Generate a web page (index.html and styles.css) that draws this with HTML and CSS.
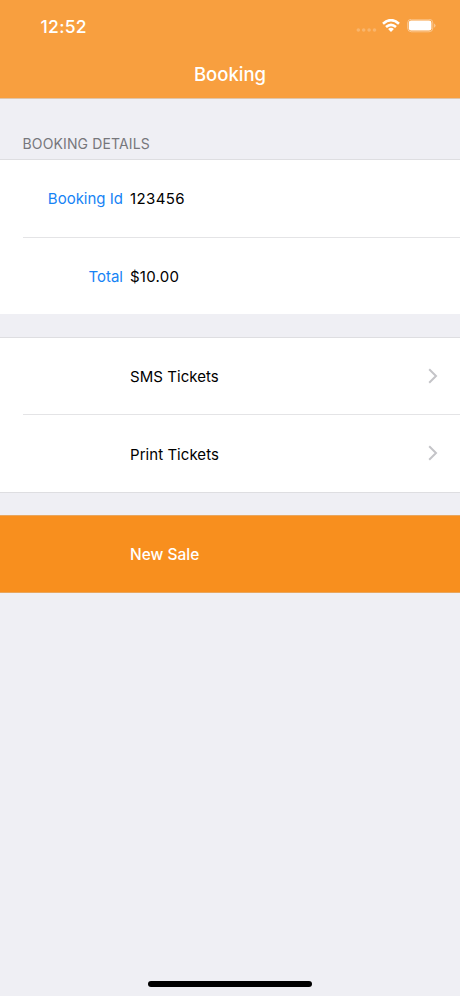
FILE: index.html
```html
<!DOCTYPE html>
<html lang="en">
<head>
<meta charset="utf-8">
<title>Booking</title>
<link rel="stylesheet" href="styles.css">
</head>
<body>
<header class="header">
  <div class="status">
    <span class="time">12:52</span>
    <div class="indicators">
      <svg class="dots" width="21" height="5" viewBox="0 0 21 5" fill="#fff" fill-opacity=".23"><circle cx="2.3" cy="2" r="1.8"/><circle cx="7.7" cy="2" r="1.8"/><circle cx="13.1" cy="2" r="1.8"/><circle cx="18.5" cy="2" r="1.8"/></svg>
      <svg class="wifi" width="18" height="14" viewBox="0 0 18 14" fill="none" stroke="#fff" stroke-width="2.6"><path d="M1 4.7Q9-2.4 17 4.7M4 8Q9 3.6 14 8"/><path d="M6.1 9.9Q9 7.8 11.9 9.9L9 12.9Z" fill="#fff" stroke="none"/></svg>
      <svg class="battery" width="29" height="14" viewBox="0 0 29 14"><rect x=".6" y=".2" width="25.2" height="12.6" rx="3.8" fill="none" stroke="#fff" stroke-opacity=".4"/><rect x="1.8" y="1.5" width="22.6" height="10" rx="2.3" fill="#fff"/><path d="M27 4.4Q28.6 5.1 28.6 6.6T27 8.8Z" fill="#fff" fill-opacity=".4"/></svg>
    </div>
  </div>
  <h1 class="title">Booking</h1>
</header>
<main>
  <h2 class="section-title">BOOKING DETAILS</h2>
  <section class="group details">
    <div class="row"><span class="label booking-label">Booking Id</span><span class="value number">123456</span></div>
    <div class="row"><span class="label total-label">Total</span><span class="value price">$10.00</span></div>
  </section>
  <section class="group links">
    <div class="row"><span class="value sms">SMS Tickets</span><svg class="chevron" width="10" height="16" viewBox="0 0 10 16"><path d="M1.2 1.3L8 8L1.2 14.7"/></svg></div>
    <div class="row"><span class="value print">Print Tickets</span><svg class="chevron" width="10" height="16" viewBox="0 0 10 16"><path d="M1.2 1.3L8 8L1.2 14.7"/></svg></div>
  </section>
  <section class="sale"><span class="value new-sale">New Sale</span></section>
</main>
<div class="home"></div>
</body>
</html>
```
FILE: styles.css
```css
* { box-sizing: border-box; }
body { margin: 0; height: 996px; display: flex; flex-direction: column; background: #efeff4; font-family: Inter, "Liberation Sans", sans-serif; color: #000; font-size: 15px; }
.header { height: 99px; background: #f89f3f; border-bottom: 1px solid #dfc5ab; color: #fff; }
.status { height: 50px; padding: 2px 24px 0 40.5px; display: flex; align-items: center; justify-content: space-between; }
.time { font-size: 17.5px; font-weight: 500; letter-spacing: .3px; }
.indicators { display: flex; align-items: center; }
.dots { margin: 8px 5px 0 0; }
.wifi { margin-right: 7px; }
.title { margin: 0; height: 48px; line-height: 48px; text-align: center; font-size: 18.5px; font-weight: 500; letter-spacing: 0; }
.section-title { margin: 0; height: 60px; padding: 35px 0 0 22.5px; line-height: 20px; font-size: 14px; font-weight: 400; letter-spacing: .13px; color: #77777c; }
.group { background: #fff; border-top: 1px solid #dedee1; }
.row { height: 77px; padding: 1px 22px 0 0; margin-left: 23px; display: flex; align-items: center; }
.row + .row { border-top: 1px solid #e4e4e6; }
.details .row:first-child { padding-top: 0; }
.label { width: 100px; margin-right: 7px; text-align: right; color: #1683f5; }
.number { letter-spacing: .4px; }
.price { letter-spacing: .25px; }
.links { margin-top: 23px; border-bottom: 1px solid #dedee1; }
.links .value { margin-left: 107px; letter-spacing: .05px; }
.chevron { margin: 0 0 2px auto; fill: none; stroke: #c4c4c8; stroke-width: 2; }
.links .row:first-child { height: 76px; }
.links .row:last-child { height: 78px; }
.sale { margin-top: 22px; height: 78px; padding-left: 130px; background: #f88f1e; border-top: 1px solid #e9a65d; border-bottom: 1px solid #e9a65d; color: #fff; display: flex; align-items: center; font-size: 15.5px; font-weight: 500; letter-spacing: 0; }
.home { margin: auto auto 9px; width: 164px; height: 6px; border-radius: 3px; background: #000; }
```
